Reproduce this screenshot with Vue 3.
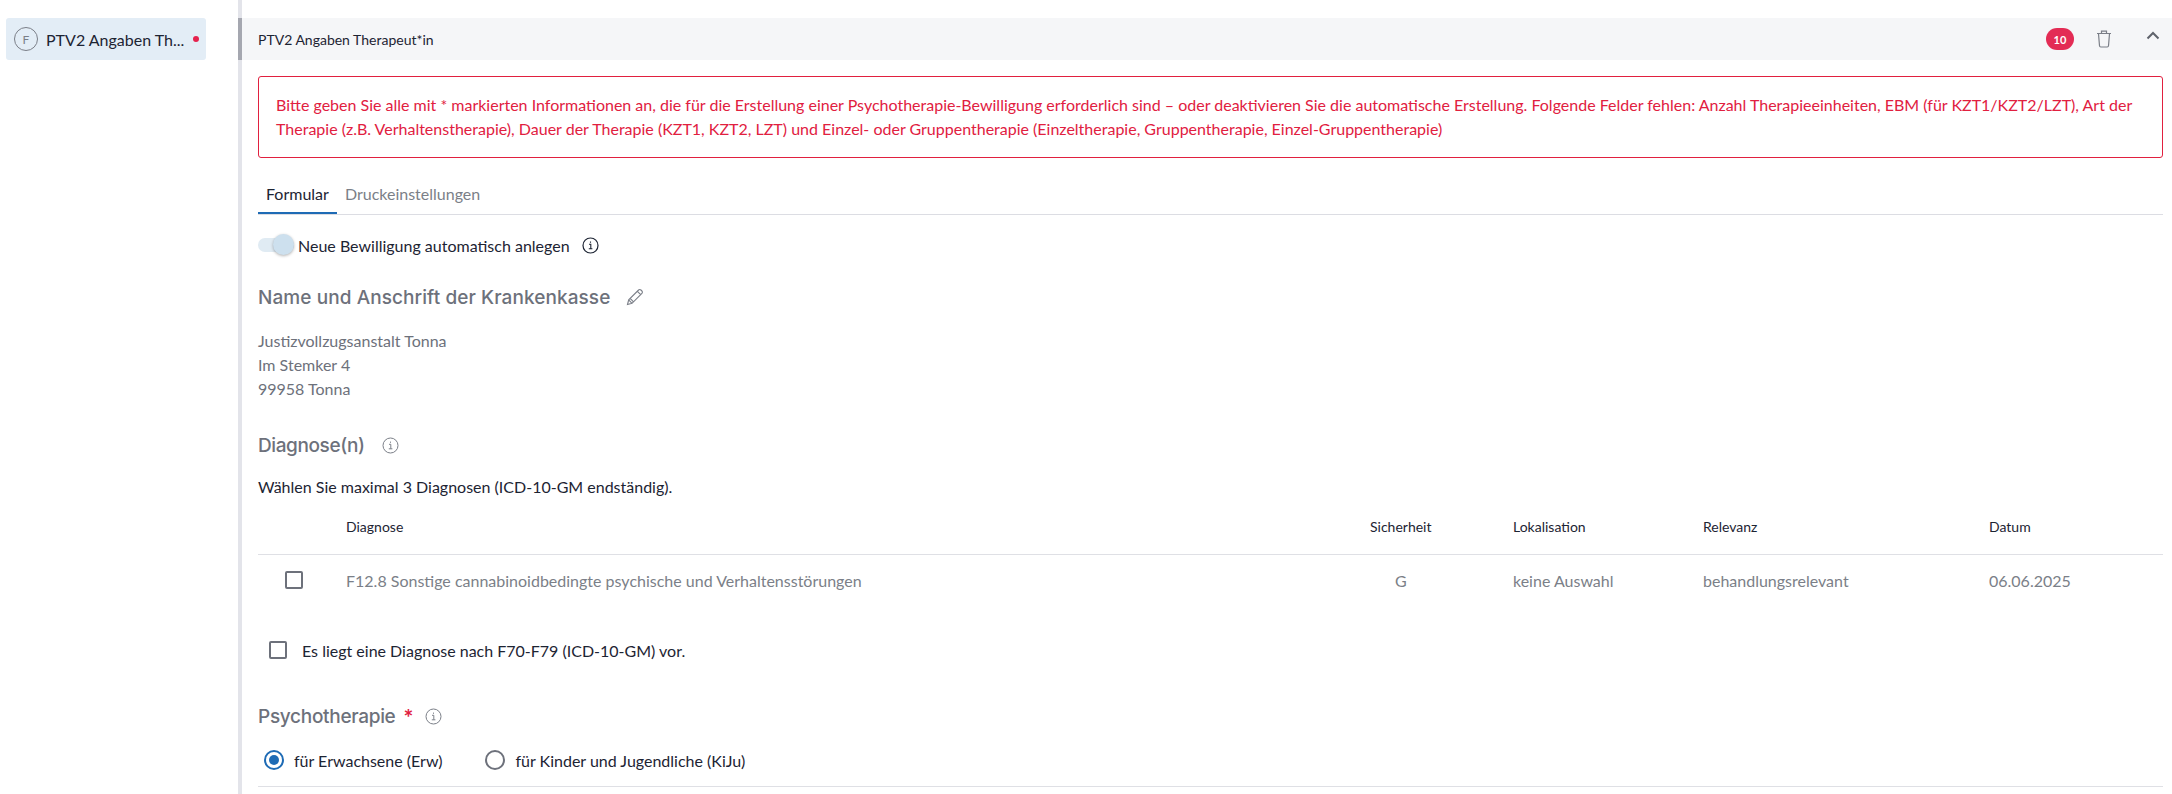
<script setup>
const heads = ['', 'Diagnose', 'Sicherheit', 'Lokalisation', 'Relevanz', 'Datum']
</script>

<template>
  <div class="page">
    <aside class="side">
      <div class="item">
        <span class="letter">F</span>
        <span class="item-text">PTV2 Angaben Th...</span>
        <span class="dot"></span>
      </div>
    </aside>
    <main class="panel">
      <header class="head">
        <span class="head-title">PTV2 Angaben Therapeut*in</span>
        <span class="badge">10</span>
        <svg class="trash" width="16" height="18" viewBox="0 0 16 18" fill="none" stroke="#7b7f88" stroke-width="1.2">
          <path d="M1 3.5h14M5.5 3.2V1.2h5v2M2.5 3.8l1 12a1.3 1.3 0 0 0 1.3 1.2h6.4a1.3 1.3 0 0 0 1.3-1.2l1-12" />
        </svg>
        <svg class="chev" width="14" height="9" viewBox="0 0 14 9" fill="none" stroke="#5f636c" stroke-width="2">
          <path d="M1.5 7.5 7 2l5.5 5.5" />
        </svg>
      </header>
      <div class="body">
        <div class="alert">Bitte geben Sie alle mit * markierten Informationen an, die für die Erstellung einer Psychotherapie-Bewilligung erforderlich sind – oder deaktivieren Sie die automatische Erstellung. Folgende Felder fehlen: Anzahl Therapieeinheiten, EBM (für KZT1/KZT2/LZT), Art der Therapie (z.B. Verhaltenstherapie), Dauer der Therapie (KZT1, KZT2, LZT) und Einzel- oder Gruppentherapie (Einzeltherapie, Gruppentherapie, Einzel-Gruppentherapie)</div>

        <nav class="tabs">
          <span class="tab active">Formular</span>
          <span class="tab">Druckeinstellungen</span>
        </nav>

        <div class="toggle-row">
          <span class="toggle"><span class="knob"></span></span>
          <span>Neue Bewilligung automatisch anlegen</span>
          <svg class="info dark" width="17" height="17" viewBox="0 0 17 17" fill="none" stroke="currentColor">
            <circle cx="8.5" cy="8.5" r="7.5" stroke-width="1.2" />
            <path d="M7 7.3h1.8v4.4M6.8 11.8h3.6M8.5 4.6v1.2" stroke-width="1.1" />
          </svg>
        </div>

        <h2 class="title first">
          Name und Anschrift der Krankenkasse
          <svg class="pencil" width="18" height="18" viewBox="0 0 18 18" fill="none" stroke="#7b7f88" stroke-width="1.1">
            <path d="M1.5 16.5l1.2-4.6L12.6 2a1.6 1.6 0 0 1 2.3 0l1 1a1.6 1.6 0 0 1 0 2.3l-9.9 10-4.5 1.2zM2.7 11.9l3.3 3.4M11.4 3.3l3.3 3.3M4.2 10.4l3.3 3.4" />
          </svg>
        </h2>
        <div class="address">
          <div>Justizvollzugsanstalt Tonna</div>
          <div>Im Stemker 4</div>
          <div>99958 Tonna</div>
        </div>

        <h2 class="title second">
          Diagnose(n)
          <svg class="info" width="17" height="17" viewBox="0 0 17 17" fill="none" stroke="#7b7f88">
            <circle cx="8.5" cy="8.5" r="7.5" stroke-width="1" />
            <path d="M7 7.3h1.8v4.4M6.8 11.8h3.6M8.5 4.6v1.2" stroke-width="1" />
          </svg>
        </h2>
        <p class="hint">Wählen Sie maximal 3 Diagnosen (ICD-10-GM endständig).</p>

        <div class="table">
          <div class="row thead">
            <span v-for="h in heads" :key="h">{{ h }}</span>
          </div>
          <div class="row tbody">
            <span class="cell-box"><span class="box"></span></span>
            <span>F12.8 Sonstige cannabinoidbedingte psychische und Verhaltensstörungen</span>
            <span class="center">G</span>
            <span>keine Auswahl</span>
            <span>behandlungsrelevant</span>
            <span>06.06.2025</span>
          </div>
        </div>

        <label class="check-row">
          <span class="box"></span>
          <span>Es liegt eine Diagnose nach F70-F79 (ICD-10-GM) vor.</span>
        </label>

        <h2 class="title third">
          Psychotherapie<span class="req">*</span>
          <svg class="info" width="17" height="17" viewBox="0 0 17 17" fill="none" stroke="#7b7f88">
            <circle cx="8.5" cy="8.5" r="7.5" stroke-width="1" />
            <path d="M7 7.3h1.8v4.4M6.8 11.8h3.6M8.5 4.6v1.2" stroke-width="1" />
          </svg>
        </h2>
        <div class="radios">
          <label class="radio-item"><span class="radio on"></span>für Erwachsene (Erw)</label>
          <label class="radio-item"><span class="radio"></span>für Kinder und Jugendliche (KiJu)</label>
        </div>
      </div>
    </main>
  </div>
</template>

<style scoped>
.page {
  display: flex;
  width: 2172px;
  height: 794px;
  overflow: hidden;
  font-family: Lato, "Liberation Sans", sans-serif;
  font-size: 16px;
  color: #1d2433;
  background: #fff;
}
.side { width: 238px; flex: none; padding: 18px 32px 0 6px; box-sizing: border-box; }
.item {
  height: 42px; display: flex; align-items: center; padding-left: 8px;
  background: #e3edf6; border-radius: 3px; box-sizing: border-box;
}
.letter {
  width: 24px; height: 24px; border: 1px solid #7b7f88; border-radius: 50%; box-sizing: border-box;
  display: flex; align-items: center; justify-content: center;
  font-size: 12px; color: #7b7f88; margin-right: 8px; flex: none;
}
.item-text { font-size: 16px; white-space: nowrap; }
.dot { width: 6px; height: 6px; border-radius: 50%; background: #e5224d; margin-left: 9px; margin-top: -1px; flex: none; }
.panel { flex: 1; min-width: 0; border-left: 4px solid #e3e4ea; position: relative; }
.head {
  margin-top: 18px; height: 42px; background: #f5f6f8; display: flex; align-items: center;
  padding: 0 12px 0 16px; position: relative;
}
.head::before { content: ""; position: absolute; left: -4px; top: 0; bottom: 0; width: 4px; background: #a5a7b0; }
.head-title { font-size: 14px; flex: 1; }
.badge {
  width: 28px; height: 22px; border-radius: 11px; background: #e32c55; color: #fff;
  font-size: 11px; font-weight: 700; display: flex; align-items: center; justify-content: center;
}
.trash { margin-left: 22px; }
.chev { margin-left: 34px; margin-top: -7px; }
.body { padding: 0 9px 0 16px; }
.alert {
  margin-top: 16px; height: 82px; box-sizing: border-box; border: 1px solid #e1203f; border-radius: 3px;
  padding: 16px 16px 0 17px; color: #e1203f; font-size: 16px; line-height: 24px;
}
.tabs { display: flex; margin-top: 24px; border-bottom: 1px solid #dcdde3; height: 32px; }
.tab { padding: 1px 8px 0; height: 29px; color: #7b7f88; font-size: 16px; line-height: 22px; }
.tab.active { color: #1d2433; border-bottom: 2px solid #1e6bb5; }
.toggle-row { display: flex; align-items: center; margin-top: 16px; height: 28px; }
.toggle { width: 36px; height: 14px; background: #e0ebf3; border-radius: 7px; position: relative; margin-right: 4px; }
.knob {
  position: absolute; right: 0; top: -4px; width: 21px; height: 21px; border-radius: 50%;
  background: #cde0ee; box-shadow: 0 1px 3px rgba(0,0,0,.3);
}
.info { margin-left: 12px; flex: none; }
.dark { color: #1d2433; }
.title {
  font-family: "Inter", "Noto Sans", sans-serif; font-weight: 500; font-size: 19px; color: #6d717b;
  margin: 0; display: flex; align-items: center; height: 26px;
}
.first { margin-top: 25px; letter-spacing: 0.08px; }
.pencil { margin-left: 16px; }
.address { margin-top: 19px; color: #6d717b; font-size: 16px; line-height: 24px; }
.second { margin-top: 31px; letter-spacing: -0.4px; }
.second .info { margin-left: 17px; }
.hint { margin: 17px 0 0; font-size: 16px; line-height: 24px; }
.table { margin-top: 15px; }
.row { display: grid; grid-template-columns: 88px 1024px 143px 190px 286px 1fr; }
.thead { height: 40px; font-size: 14px; line-height: 25px; border-bottom: 1px solid #dfe0e5; }
.tbody { height: 50px; padding-bottom: 4px; align-items: center; color: #7b7f88; font-size: 16px; }
.tbody .center { padding-left: 25px; }
.cell-box { padding-left: 27px; display: flex; }
.box { width: 18px; height: 18px; border: 2px solid #6d717b; border-radius: 2px; box-sizing: border-box; display: block; flex: none; }
.check-row { display: flex; align-items: center; gap: 15px; margin: 27px 0 0 11px; height: 28px; }
.third { margin-top: 39px; letter-spacing: -0.3px; }
.req { color: #e1203f; margin-left: 8px; font-size: 19px; }
.radios { display: flex; gap: 43px; margin: 18px 0 0 6px; height: 26px; }
.radio-item { display: flex; align-items: center; gap: 10px; }
.radio { width: 20px; height: 20px; border: 2px solid #6d717b; border-radius: 50%; box-sizing: border-box; position: relative; }
.radio.on { border-color: #1e6bb5; }
.radio.on::after { content: ""; position: absolute; inset: 3px; border-radius: 50%; background: #1e6bb5; }
.body::after { content: ""; display: block; height: 1px; background: #dfe0e5; margin-top: 13px; }
</style>
